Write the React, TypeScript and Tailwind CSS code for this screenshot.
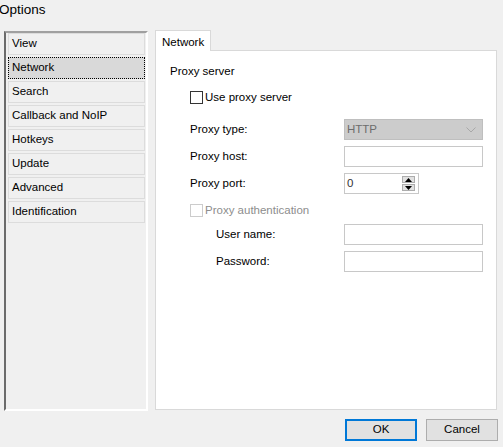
import React from "react"

const pages = ["View", "Network", "Search", "Callback and NoIP", "Hotkeys", "Update", "Advanced", "Identification"]

function Check({ disabled, label }: { disabled?: boolean; label: string }) {
  return (
    <div className="flex items-center h-[13px] ml-[20px]">
      <div
        className={`w-[13px] h-[13px] border bg-white ${disabled ? "border-[#cccccc]" : "border-[#333333]"}`}
      />
      <span className={`ml-[2px] leading-none ${disabled ? "text-[#8d8d8d]" : "text-black"}`}>{label}</span>
    </div>
  )
}

function Field({ label, indent, children }: { label: string; indent?: boolean; children: React.ReactNode }) {
  return (
    <div className="flex items-center h-[21px]">
      <span className={indent ? "ml-[46px] w-[128px]" : "ml-[20px] w-[154px]"}>{label}</span>
      {children}
    </div>
  )
}

function TextBox() {
  return <div className="w-[139px] h-[21px] border border-[#c8c8c8] bg-white" />
}

export default function App() {
  return (
    <div
      className="w-[503px] h-[447px] bg-[#f0f0f0] text-[11.5px] text-black overflow-hidden"
      style={{ fontFamily: '"Liberation Sans", Arial, sans-serif' }}
    >
      {/* Title */}
      <div className="h-[20px] flex items-center text-[13.5px] leading-none -ml-[1px]">Options</div>

      <div className="flex mt-[10px]">
        {/* Page list */}
        <div className="ml-[4px] mt-[1px] w-[144px] h-[380px] border-l-2 border-t-2 border-l-[#6b6b6b] border-t-[#a0a0a0] border-r-2 border-b-2 border-r-white border-b-white pl-[2px] pr-[1px] flex flex-col gap-[2px]">
          {pages.map((p) => (
            <div
              key={p}
              className={`h-[22px] flex items-center pl-[3px] border ${
                p === "Network" ? "bg-[#d9d9d9] border-dotted border-black" : "border-[#dcdcdc]"
              }`}
            >
              {p}
            </div>
          ))}
        </div>

        {/* Tab area */}
        <div className="ml-[7px] w-[342px] flex flex-col">
          <div className="flex">
            <div className="w-[56px] h-[21px] bg-white border border-b-0 border-[#d9d9d9] pl-[6px] pt-[3px] -mb-[1px] relative z-10">
              Network
            </div>
          </div>
          <div className="h-[360px] bg-white border border-[#d9d9d9] pl-[14px] flex flex-col">
            <div className="mt-[13px] h-[16px] flex items-center">Proxy server</div>
            <div className="mt-[11px]">
              <Check label="Use proxy server" />
            </div>
            <div className="mt-[15px]">
              <Field label="Proxy type:">
                <div className="w-[139px] h-[21px] bg-[#cccccc] border border-[#bfbfbf] flex items-center justify-between pl-[2px] pr-[6px] text-[#6d6d6d]">
                  <span>HTTP</span>
                  <svg width="10" height="6" viewBox="0 0 10 6" fill="none">
                    <path d="M0.5 0.5L5 5L9.5 0.5" stroke="#a8a8a8" strokeWidth="1" />
                  </svg>
                </div>
              </Field>
            </div>
            <div className="mt-[6px]">
              <Field label="Proxy host:">
                <TextBox />
              </Field>
            </div>
            <div className="mt-[6px]">
              <Field label="Proxy port:">
                <div className="w-[75px] h-[21px] border border-[#c8c8c8] bg-white flex items-center justify-between pl-[2px] pr-[3px]">
                  <span className="text-[#333]">0</span>
                  <div className="flex flex-col gap-[1px]">
                    <div className="w-[13px] h-[7px] bg-[#e1e1e1] border border-[#adadad] flex items-center justify-center">
                      <svg width="7" height="4" viewBox="0 0 7 4">
                        <path d="M0 4L3.5 0L7 4Z" fill="#000" />
                      </svg>
                    </div>
                    <div className="w-[13px] h-[7px] bg-[#e1e1e1] border border-[#adadad] flex items-center justify-center">
                      <svg width="7" height="4" viewBox="0 0 7 4">
                        <path d="M0 0L3.5 4L7 0Z" fill="#000" />
                      </svg>
                    </div>
                  </div>
                </div>
              </Field>
            </div>
            <div className="mt-[10px]">
              <Check disabled label="Proxy authentication" />
            </div>
            <div className="mt-[7px]">
              <Field indent label="User name:">
                <TextBox />
              </Field>
            </div>
            <div className="mt-[6px]">
              <Field indent label="Password:">
                <TextBox />
              </Field>
            </div>
          </div>
        </div>
      </div>

      {/* Buttons */}
      <div className="flex justify-end gap-[9px] pr-[5px] mt-[8px]">
        <button className="w-[72px] h-[22px] bg-[#e1e1e1] border-2 border-[#0078d7] leading-none">OK</button>
        <button className="w-[72px] h-[22px] bg-[#e1e1e1] border border-[#adadad] leading-none">Cancel</button>
      </div>
    </div>
  )
}
